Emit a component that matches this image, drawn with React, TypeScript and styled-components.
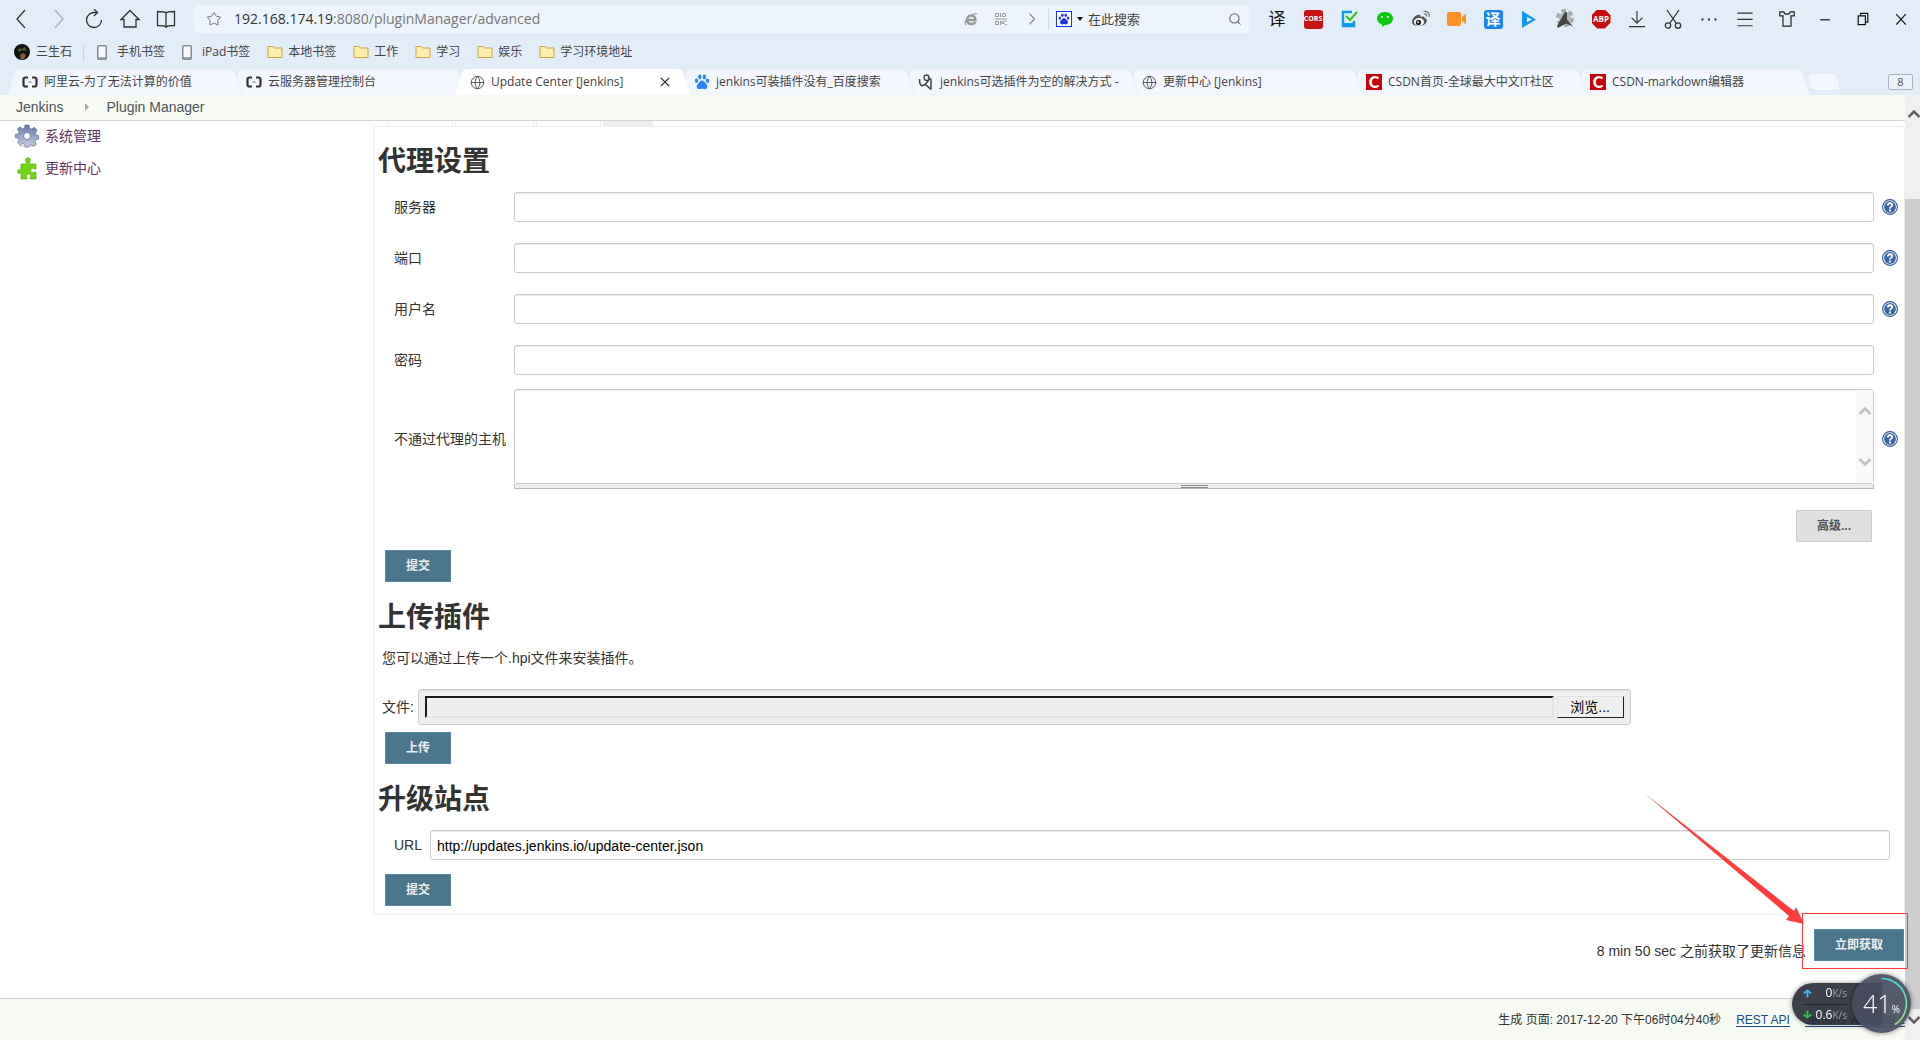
import React from 'react';
import styled, { createGlobalStyle } from 'styled-components';
import { Globe, Search, Star } from 'lucide-react';

const uiFont = '"Open Sans", "Noto Sans CJK SC", sans-serif';
const pageFont = '"Liberation Sans", "Noto Sans CJK SC", sans-serif';

const GlobalStyle = createGlobalStyle`
  *, *::before, *::after { box-sizing: border-box; }
  body { margin: 0; background: #fff; }
  button, input, textarea { font: inherit; margin: 0; }
  svg { display: block; flex: none; }
`;

const Window = styled.div`
  display: flex;
  flex-direction: column;
  min-height: 100vh;
  color: #333;
  font-family: ${pageFont};
  font-size: 14px;
  line-height: 20px;
`;

/* ---------- browser chrome ---------- */

const Chrome = styled.header`
  background: #e3edf8;
  font-family: ${uiFont};
  font-size: 12px;
  line-height: 20px;
  color: #444;
`;

const Toolbar = styled.div`
  display: flex;
  align-items: center;
  height: 38px;
`;

const ToolButtons = styled.div`
  display: flex;
  padding-left: 4px;
  width: 194px;
  flex: none;
`;

const IconButton = styled.button<{ $w?: number }>`
  display: flex;
  align-items: center;
  justify-content: center;
  flex: none;
  width: ${(p) => p.$w ?? 36}px;
  height: 28px;
  padding: 0;
  border: 0;
  background: none;
  color: #333;
`;

const AddressBar = styled.div`
  display: flex;
  flex: 1;
  align-items: center;
  height: 28px;
  border-radius: 4px;
  background: #eef4fb;
  min-width: 0;
`;

const Address = styled.div`
  flex: 1;
  font-size: 14px;
  color: #777;
  white-space: nowrap;
  overflow: hidden;
`;

const Host = styled.span`
  color: #333;
`;

const SearchBox = styled.div`
  display: flex;
  align-items: center;
  width: 202px;
  height: 22px;
  padding-left: 7px;
  border-left: 1px solid #cfdae6;
`;

const SearchInput = styled.input`
  flex: 1;
  min-width: 0;
  padding: 0;
  border: 0;
  background: none;
  font-size: 13px;
  color: #444;
  &::placeholder { color: #444; opacity: 1; }
`;

const Extensions = styled.div`
  display: flex;
  flex: none;
  padding-left: 9px;
`;

const Controls = styled.div`
  display: flex;
  flex: none;
  margin-left: 5px;
`;

const TextBadge = styled.span<{ $bg: string; $size: number; $round?: number }>`
  display: flex;
  align-items: center;
  justify-content: center;
  width: 19px;
  height: 19px;
  border-radius: ${(p) => p.$round ?? 3}px;
  background: ${(p) => p.$bg};
  color: #fff;
  font-size: ${(p) => p.$size}px;
  font-weight: 700;
`;

const Octagon = styled(TextBadge)`
  clip-path: polygon(30% 0, 70% 0, 100% 30%, 100% 70%, 70% 100%, 30% 100%, 0 70%, 0 30%);
`;

const PlainGlyph = styled.span`
  font-size: 17px;
  color: #111;
`;

const Bookmarks = styled.nav`
  display: flex;
  align-items: center;
  gap: 17px;
  height: 28px;
  padding-left: 14px;
`;

const Bookmark = styled.a<{ $gap?: number }>`
  display: flex;
  align-items: center;
  gap: ${(p) => p.$gap ?? 5}px;
  color: #444;
  text-decoration: none;
  white-space: nowrap;
`;

const Divider = styled.span`
  width: 1px;
  height: 16px;
  margin: 0 -4px -1px -6px;
  background: #c8d3df;
`;

const TabStrip = styled.div`
  display: flex;
  align-items: flex-end;
  height: 29px;
  padding: 0 7px 0 5px;
`;

const Tab = styled.div<{ $z: number }>`
  position: relative;
  z-index: ${(p) => p.$z};
  flex: 0 1 224px;
  min-width: 0;
  height: 26px;
`;

const TabShape = styled.svg`
  position: absolute;
  left: 0;
  top: 0;
  width: calc(100% + 14px);
  height: 26px;
`;

const TabFace = styled.button`
  position: relative;
  display: flex;
  align-items: center;
  gap: 6px;
  width: 100%;
  height: 26px;
  padding: 0 6px 0 17px;
  border: 0;
  background: none;
  color: #444;
  text-align: left;
  white-space: nowrap;
`;

const TabTitle = styled.span`
  flex: 1;
`;

const FavC = styled.span`
  width: 16px;
  height: 16px;
  background: #c8000b;
  color: #fff;
  font: 900 16px/16px "Lato", sans-serif;
  text-align: center;
`;

const NewTab = styled.button`
  width: 28px;
  height: 16px;
  margin: 0 0 5px 13px;
  padding: 0;
  border: 0;
  border-radius: 4px;
  background: #f3f7fd;
  transform: skewX(15deg);
`;

const TabCount = styled.button`
  width: 25px;
  height: 16px;
  margin: 0 0 5px auto;
  padding: 0;
  border: 1px solid #a9b4c0;
  border-radius: 2px;
  background: #eaf1f9;
  color: #555;
  font-size: 11px;
  line-height: 14px;
`;

/* ---------- page ---------- */

const Viewport = styled.div`
  display: flex;
  flex: 1;
`;

const Page = styled.div`
  display: flex;
  flex: 1;
  flex-direction: column;
  min-width: 0;
`;

const Breadcrumbs = styled.nav`
  display: flex;
  align-items: center;
  height: 26px;
  padding: 0 16px 2px;
  border-bottom: 1px solid #d3d7cf;
  background: #f6faf2;
`;

const Crumb = styled.a`
  color: #4d545d;
  text-decoration: none;
`;

const CrumbArrow = styled.span`
  width: 4px;
  margin: 0 17px 0 22px;
  border: 4px solid transparent;
  border-left-color: #aaa;
  border-right: 0;
`;

const Body = styled.div`
  display: flex;
  flex: 1;
`;

const SidePanel = styled.nav`
  display: flex;
  flex-direction: column;
  gap: 8px;
  width: 373px;
  flex: none;
  padding: 3px 15px;
`;

const Task = styled.a`
  display: flex;
  align-items: center;
  gap: 6px;
  height: 24px;
  color: #5c3566;
  text-decoration: none;
`;

const Main = styled.main`
  flex: 1;
  min-width: 0;
`;

const TabRow = styled.div`
  display: flex;
  gap: 2px;
  height: 5px;
  padding-left: 15px;
`;

const TabStub = styled.span<{ $w: number; $active?: boolean }>`
  width: ${(p) => p.$w}px;
  border: solid #eee;
  border-width: 0 1px;
  background: ${(p) => (p.$active ? '#eee' : '#fff')};
`;

const Panel = styled.div`
  padding: 17px 6px 8px 4px;
  border: 1px solid #eee;
  border-radius: 4px;
`;

const Heading = styled.h1`
  margin: 0 0 12px;
  font-size: 28px;
  line-height: 36px;
  font-weight: 700;
`;

const Section = styled.section`
  & + & { margin-top: 18px; }
`;

const Fields = styled.div`
  display: grid;
  gap: 21px;
`;

const FieldRow = styled.div`
  display: grid;
  grid-template-columns: 120px 1fr 24px;
  align-items: center;
  padding-left: 16px;
`;

const HostsRow = styled(FieldRow)`
  margin-top: -7px;
`;

const UrlRow = styled.div`
  display: grid;
  grid-template-columns: 36px 1fr;
  align-items: center;
  padding: 0 8px 0 16px;
`;

const fieldBox = `
  border: 1px solid #ccc;
  border-radius: 3px;
  background: #fff;
  box-shadow: inset 0 1px 1px rgba(0, 0, 0, 0.08);
`;

const TextInput = styled.input`
  ${fieldBox}
  width: 100%;
  height: 30px;
  padding: 2px 6px 0;
  color: #000;
`;

const HelpButton = styled.button`
  width: 16px;
  height: 16px;
  margin-left: 8px;
  padding: 0;
  border: 0;
  background: none;
`;

const AreaBox = styled.div`
  ${fieldBox}
  display: flex;
  height: 95px;
`;

const Area = styled.textarea`
  flex: 1;
  padding: 6px;
  border: 0;
  background: none;
  resize: none;
  overflow: hidden;
`;

const AreaScroll = styled.div`
  display: flex;
  flex-direction: column;
  justify-content: space-between;
  align-items: center;
  width: 17px;
  padding: 16px 0;
  background: #f8f8f8;
`;

const ResizeBar = styled.div`
  display: flex;
  justify-content: center;
  align-items: flex-end;
  height: 5px;
  border: solid #b9b9b3;
  border-width: 0 1px 1px;
  background: #eee;
`;

const Grip = styled.span`
  width: 27px;
  height: 3px;
  border: solid #888a85;
  border-width: 1px 0;
`;

const AdvancedRow = styled.div`
  display: flex;
  justify-content: flex-end;
  padding-right: 26px;
  margin-bottom: 8px;
`;

const PlainButton = styled.button`
  height: 32px;
  padding: 0 20px;
  border: 1px solid #ccc;
  background: #e0e0e0;
  color: #4d545d;
  font-size: 12px;
  font-weight: 700;
`;

const PrimaryButton = styled.button`
  height: 32px;
  padding: 0 20px;
  border: 1px solid #5788a0;
  background: #4b758b;
  color: #eee;
  font-size: 12px;
  font-weight: 700;
  white-space: nowrap;
`;

const Submit = styled(PrimaryButton)<{ $top?: number }>`
  display: block;
  margin: ${(p) => p.$top ?? 0}px 0 0 7px;
`;

const Intro = styled.p`
  margin: 0 4px;
  padding-bottom: 21px;
`;

const FileRow = styled.div`
  display: flex;
  align-items: center;
  gap: 4px;
  padding-left: 4px;
`;

const FilePicker = styled.div`
  display: flex;
  gap: 3px;
  width: 80%;
  height: 36px;
  padding: 6px;
  border: 1px solid #ccc;
  border-radius: 3px;
  background: #efefef;
  box-shadow: inset 0 1px 1px rgba(0, 0, 0, 0.08);
`;

const FileName = styled.input`
  flex: 1;
  min-width: 0;
  border: 2px solid;
  border-color: #1a1a1a #e3e3e3 #e3e3e3 #1a1a1a;
  background: #efefef;
`;

const Browse = styled.button`
  width: 67px;
  padding: 0;
  border: 1px solid;
  border-color: #e3e3e3 #222 #222 #e3e3e3;
  background: #efefef;
  color: #000;
`;

const CheckRow = styled.div`
  display: flex;
  justify-content: flex-end;
  align-items: flex-end;
  gap: 8px;
  padding: 14px 1px 36px 0;
`;

const Marked = styled.div`
  position: relative;
  z-index: 10;
`;

const MarkFrame = styled.span`
  position: absolute;
  inset: -16px -4px -8px -12px;
  border: 1px solid #ff3b3b;
  pointer-events: none;
`;

const MarkArrow = styled.svg`
  position: absolute;
  right: 100px;
  bottom: 36px;
  pointer-events: none;
`;

const Footer = styled.footer`
  display: flex;
  justify-content: flex-end;
  align-items: center;
  gap: 15px;
  height: 42px;
  border-top: 1px solid #d3d7cf;
  background: #f6faf2;
  font-size: 12px;
  white-space: nowrap;
`;

const FootLink = styled.a`
  color: #204a87;
  text-underline-offset: 2px;
`;

const ScrollTrack = styled.div`
  display: flex;
  flex-direction: column;
  width: 15px;
  flex: none;
  background: #f0f0f0;
`;

const ScrollEnd = styled.div<{ $h: number; $top: number }>`
  height: ${(p) => p.$h}px;
  padding: ${(p) => p.$top}px 0 0 3px;
  overflow: hidden;
`;

const ScrollThumb = styled.div`
  flex: 1;
  background: #cdcdcd;
`;

/* ---------- network monitor ---------- */

const Monitor = styled.aside`
  position: fixed;
  z-index: 20;
  right: 9px;
  bottom: 7px;
  display: flex;
  align-items: center;
  color: #fff;
  font-family: "Open Sans", sans-serif;
`;

const Rates = styled.div`
  display: grid;
  grid-template-rows: 21px 21px;
  width: 90px;
  margin-right: -30px;
  padding: 0 35px 0 11px;
  border-radius: 21px 0 0 21px;
  background: rgba(34, 38, 49, 0.88);
  box-shadow: 0 0 5px rgba(0, 0, 0, 0.4);
`;

const Rate = styled.div`
  display: flex;
  align-items: center;
  justify-content: space-between;
  font-size: 12px;
  line-height: 20px;
  white-space: nowrap;
  & + & { border-top: 1px solid #22252e; }
`;

const Unit = styled.small`
  font-size: 10px;
  color: #9a9da6;
`;

const Gauge = styled.div`
  position: relative;
  display: flex;
  align-items: baseline;
  justify-content: center;
  width: 59px;
  height: 59px;
  border-radius: 50%;
  background: rgba(72, 78, 96, 0.92);
  box-shadow: 0 0 5px rgba(0, 0, 0, 0.5);
  font-size: 25px;
  line-height: 59px;
  font-weight: 300;
`;

const Percent = styled.small`
  font-size: 10px;
  font-weight: 400;
`;

const Arc = styled.svg`
  position: absolute;
  left: 0;
  top: 0;
`;

/* ---------- drawings ---------- */

const Line = ({ d, w = 20, color = '#333', sw = 1.3 }: { d: string; w?: number; color?: string; sw?: number }) => (
  <svg width={w} height={w} viewBox="0 0 20 20" fill="none" stroke={color} strokeWidth={sw}>
    <path d={d} />
  </svg>
);

const Folder = () => (
  <svg width="16" height="14" viewBox="0 0 16 14">
    <path d="M1 1.500h5l1.500 1.500h7.500v9.500H1z" fill="#fdeeb0" stroke="#cba344" />
  </svg>
);

const Phone = () => (
  <svg width="10" height="15" viewBox="0 0 10 15">
    <rect x="0.750" y="0.750" width="8.500" height="13.500" rx="1" fill="#f7fafd" stroke="#868b92" strokeWidth="1.500" />
    <path d="M1 13h8" stroke="#868b92" strokeWidth="1.500" />
  </svg>
);

const Avatar = () => (
  <svg width="16" height="16" viewBox="0 0 16 16">
    <circle cx="8" cy="8" r="8" fill="#11130f" />
    <path d="M3 6l3-2 2 1 3-2 2 3-3 1-2-1-2 2z" fill="#4c5538" />
    <path d="M6 11l3-2 3 2-2 4-3 .5z" fill="#8a5a35" />
  </svg>
);

const Cloud = () => (
  <svg width="16" height="12" viewBox="0 0 16 12" fill="none" stroke="#333" strokeWidth="2.200">
    <path d="M6 1.500H3.500Q1.500 1.500 1.500 3.500v5q0 2 2 2H6M10 1.500h2.500q2 0 2 2v5q0 2-2 2H10" />
    <path d="M6.500 6h3" strokeWidth="1.200" stroke="#888" />
  </svg>
);

const Paw = ({ color = '#2c86f8', size = 16 }: { color?: string; size?: number }) => (
  <svg width={size} height={size} viewBox="0 0 16 16" fill={color}>
    <ellipse cx="2.500" cy="6.800" rx="1.700" ry="2.200" />
    <ellipse cx="5.800" cy="3" rx="1.700" ry="2.400" />
    <ellipse cx="10.300" cy="3" rx="1.700" ry="2.400" />
    <ellipse cx="13.500" cy="6.800" rx="1.700" ry="2.200" />
    <path d="M8 6.500c2 0 2.500 1.800 4 3.200 2.200 2 1.300 5.500-1.200 5.500-1.200 0-1.800-.4-2.800-.4s-1.600.4-2.800.4c-2.500 0-3.400-3.500-1.200-5.500C5.500 8.300 6 6.500 8 6.500z" />
  </svg>
);

const PawFrame = () => (
  <svg width="16" height="16" viewBox="0 0 16 16">
    <rect x="0.500" y="0.500" width="15" height="15" fill="#fff" stroke="#1a35f0" />
    <svg x="2" y="2" width="12" height="12"><Paw color="#1a35f0" size={12} /></svg>
  </svg>
);

const Blog = () => (
  <svg width="16" height="16" viewBox="0 0 16 16" fill="none" stroke="#444" strokeWidth="1.500">
    <path d="M1.500 5c0 5 1 8 4.500 6 3-2 5-4 5-7 0-4-5-4-5-.5 0 3 3 4 5.500 1.500q1.500-1 1.500 1v9.500M7 10l6 5.500" />
  </svg>
);

const EIcon = () => (
  <svg width="14" height="14" viewBox="0 0 14 14" fill="none" stroke="#999" strokeWidth="2.400">
    <path d="M3 8h8.500c0-6-8.500-6-8.500 0 0 5 7 5 8.200 2" />
    <path d="M2 13C-1 10 5 2 13 1.500" strokeWidth="1.200" />
  </svg>
);

const Qr = () => (
  <svg width="12" height="12" viewBox="0 0 12 12" fill="none" stroke="#999">
    <path d="M.5.500h3v3h-3zM7.500.500h3v3h-3zM.5 8.500h3v3h-3zM5.500 0v4M0 6h12M5.500 8v4M7 8.500h2v2H7zM10 8h2M10 11.500h2" />
  </svg>
);

const Weibo = () => (
  <svg width="20" height="20" viewBox="0 0 20 20">
    <path d="M1 13c0-4 5-8 8-7 1 .4.800 1.500.6 2 2-1 4-.8 4 1 3 1 2.800 4 .4 6-4 3.500-13 2.500-13-2z" fill="#555" />
    <ellipse cx="8" cy="13" rx="5" ry="4" fill="#fff" />
    <circle cx="7.500" cy="13.500" r="2.700" fill="#222" />
    <circle cx="7" cy="13" r="0.900" fill="#fff" />
    <path d="M13 5c2-.5 3 1 2.500 2.500M12.500 2.500c4-1 6.500 2 5.500 5.500" fill="none" stroke="#777" strokeWidth="1.200" />
  </svg>
);

const Wechat = () => (
  <svg width="18" height="18" viewBox="0 0 18 18">
    <path d="M9 2c4.500 0 8 2.700 8 6.500S13.500 15 9 15l-3 2v-2.500C3 13.500 1 11.500 1 8.500 1 4.700 4.500 2 9 2z" fill="#0bcb0b" />
    <circle cx="6" cy="7" r="1.100" fill="#fff" />
    <circle cx="12" cy="7" r="1.100" fill="#fff" />
  </svg>
);

const Todo = () => (
  <svg width="18" height="18" viewBox="0 0 18 18" fill="none">
    <path d="M12 2H3v14h11v-5" stroke="#0e9bea" strokeWidth="2.400" />
    <path d="M3 15h11" stroke="#0e9bea" strokeWidth="4" />
    <path d="M6 6l4 4 7-8" stroke="#3cc01f" strokeWidth="2.200" />
  </svg>
);

const Camera = () => (
  <svg width="20" height="14" viewBox="0 0 20 14" fill="#ff9124">
    <rect width="14" height="14" rx="2" />
    <path d="M15 5l4-3.500v11L15 9z" />
  </svg>
);

const Play = () => (
  <svg width="16" height="17" viewBox="0 0 16 17">
    <path d="M1 0l14 8.500L1 17z" fill="#1296f3" />
    <path d="M6 6l5 2.500L6 11z" fill="#fff" />
  </svg>
);

const Compass = () => (
  <svg width="20" height="20" viewBox="0 0 20 20">
    <circle cx="10" cy="9" r="7" fill="none" stroke="#a5a8ab" strokeWidth="4" strokeDasharray="4.500 2.830" />
    <circle cx="10" cy="9" r="6" fill="#b5b8bb" />
    <path d="M10 3l2 .5v7l6 7-7-3-8 4.500L2 17z" fill="#444" />
  </svg>
);

const Shirt = () => <Line w={16} color="#222" sw={1.500} d="M6 1H1v5h4v13h10V6h4V1h-5c-1 4-7 4-8 0z" />;

const Scissors = () => (
  <svg width="18" height="20" viewBox="0 0 18 20" fill="none" stroke="#333" strokeWidth="1.300">
    <path d="M3 1l9 13M15 1L6 14" />
    <circle cx="4" cy="16.500" r="2.700" />
    <circle cx="14" cy="16.500" r="2.700" />
  </svg>
);

const Gear = () => (
  <svg width="24" height="24" viewBox="0 0 24 24">
    <defs>
      <linearGradient id="steel" x1="0" y1="0" x2="0" y2="1">
        <stop offset="0" stopColor="#6478a4" />
        <stop offset="1" stopColor="#c9cfe4" />
      </linearGradient>
    </defs>
    <ellipse cx="12" cy="22" rx="8" ry="1.500" fill="#ddd" />
    <path
      d="M10 1h4l.7 3.200 2 .9 2.800-1.800 2.600 2.800-1.700 2.800.8 2L24 12v3l-3 .6-1 2 1.400 2.700-2.700 2-2.500-1.700-2 .8L13.500 23h-3l-.8-2.700-2-.8-2.500 1.600-2.500-2.300 1.500-2.600-.9-2L0 13.500v-3l3.300-.7.800-2-1.800-2.700L5 2.800l2.500 1.900 2-.8z"
      fill="url(#steel)" stroke="#6f7ca3" strokeWidth="0.800"
    />
    <circle cx="12" cy="12" r="3.500" fill="#fff" stroke="#7582a8" />
  </svg>
);

const Puzzle = () => (
  <svg width="24" height="24" viewBox="0 0 24 24">
    <path
      d="M11 8c1-1.500-.8-2.500-.3-4.500C11.300 1 15 1 15.300 3.500 15.500 5.500 14 6 14.500 8H21v5c-1.500.5-2-1-3.500-.7-2.500.5-2.300 4 .2 4.300 1.500.2 2-1 3.300-.6V23h-6c-.5-1.500.8-2 .5-3.400-.5-2.200-3.600-2-3.900.2-.2 1.300.9 1.800.4 3.200H6v-6c-1 0-1.500 1-2.500.4-1.500-1-1-4 .8-4 .8 0 1 .8 1.700.6V8z"
      fill="#73d216" stroke="#5fb512" strokeWidth="0.700"
    />
  </svg>
);

const Help = () => (
  <svg width="16" height="16" viewBox="0 0 16 16">
    <circle cx="8" cy="8" r="7.400" fill="#fff" stroke="#2c5594" strokeWidth="1.100" />
    <circle cx="8" cy="8" r="5.900" fill="#3a66a6" />
    <path d="M5.900 6.500c0-3 4.400-2.800 4.400-.5C10.300 7.600 8 7.700 8 9.400M8 10.500v2" fill="none" stroke="#fff" strokeWidth="1.800" />
  </svg>
);

const Chevron = ({ up, color }: { up?: boolean; color: string }) => (
  <svg width="12" height="10" viewBox="0 0 12 10" fill="none" stroke={color} strokeWidth="2.600">
    <path d={up ? 'M.5 8L6 2.500 11.500 8' : 'M.5 2L6 7.500 11.500 2'} />
  </svg>
);

const GlobeIcon = () => <Globe size={15} strokeWidth={1.500} color="#555" />;

/* ---------- data ---------- */

const tools = [
  { name: '后退', d: 'M13 1L5 10l8 9', color: '#333' },
  { name: '前进', d: 'M7 1l8 9-8 9', color: '#a9b0b8' },
  { name: '刷新', d: 'M17.500 11A7.500 7.500 0 1 1 10.500 3.500H13M10 0l3.500 3.500L10 7', color: '#333' },
  { name: '主页', d: 'M1 10.500L10 1.500l9 9h-3V18H4v-7.500z', color: '#333' },
  { name: '阅读', d: 'M10 4v15M10 4C9 2.500 7 2.500 1.500 2.500V16.500c5 0 7.500 0 8.500 1.500 1-1.500 3.500-1.500 8.500-1.500V2.500C13 2.500 11 2.500 10 4z', color: '#333' },
];

const extensions = [
  { name: '划词翻译', icon: <PlainGlyph>译</PlainGlyph> },
  { name: 'CORS', icon: <TextBadge $bg="#c81414" $size={7}>CORS</TextBadge> },
  { name: '待办', icon: <Todo /> },
  { name: '微信', icon: <Wechat /> },
  { name: '微博', icon: <Weibo /> },
  { name: '录像', icon: <Camera /> },
  { name: '翻译', icon: <TextBadge $bg="#1784f5" $size={15}>译</TextBadge> },
  { name: '播放', icon: <Play /> },
  { name: '工具箱', icon: <Compass /> },
  { name: 'ABP', icon: <Octagon $bg="#c60c0d" $size={8} $round={0}>ABP</Octagon> },
  { name: '下载', icon: <Line w={18} d="M10 1v13M4 8.500l6 6 6-6M1 18.500h18" /> },
  { name: '截图', icon: <Scissors /> },
  { name: '更多', icon: <Line d="M2.500 10.500h2M9 10.500h2M15.500 10.500h2" sw={2} /> },
  { name: '菜单', icon: <Line w={18} d="M1.500 3.500h17M1.500 10.500h17M1.500 17.500h17" /> },
];

const controls = [
  { name: '皮肤', icon: <Shirt /> },
  { name: '最小化', icon: <Line w={16} color="#111" sw={1.500} d="M4 11h12" /> },
  { name: '还原', icon: <Line w={16} color="#111" sw={1.500} d="M4 6h9v11H4zM7 6V3h9v11h-3" /> },
  { name: '关闭', icon: <Line w={16} color="#111" sw={1.500} d="M4 4l12 13M16 4L4 17" /> },
];

const folders = ['本地书签', '工作', '学习', '娱乐', '学习环境地址'];

const tabs = [
  { title: '阿里云-为了无法计算的价值', icon: <Cloud /> },
  { title: '云服务器管理控制台', icon: <Cloud /> },
  { title: 'Update Center [Jenkins]', icon: <GlobeIcon />, active: true },
  { title: 'jenkins可装插件没有_百度搜索', icon: <Paw /> },
  { title: 'jenkins可选插件为空的解决方式 -', icon: <Blog /> },
  { title: '更新中心 [Jenkins]', icon: <GlobeIcon /> },
  { title: 'CSDN首页-全球最大中文IT社区', icon: <FavC>C</FavC> },
  { title: 'CSDN-markdown编辑器', icon: <FavC>C</FavC> },
];

const proxyFields = [
  { id: 'server', label: '服务器', help: true },
  { id: 'port', label: '端口', help: true },
  { id: 'user', label: '用户名', help: true },
  { id: 'password', label: '密码', help: false, type: 'password' },
];

const HelpFor = ({ label }: { label: string }) => (
  <HelpButton type="button" aria-label={`帮助: ${label}`}><Help /></HelpButton>
);

const BrowserChrome = () => (
  <Chrome>
    <Toolbar>
      <ToolButtons>
        {tools.map((t) => (
          <IconButton key={t.name} aria-label={t.name}><Line d={t.d} color={t.color} /></IconButton>
        ))}
      </ToolButtons>
      <AddressBar>
        <IconButton $w={40} aria-label="收藏"><Star size={16} strokeWidth={1.500} color="#777" /></IconButton>
        <Address><Host>192.168.174.19</Host>:8080/pluginManager/advanced</Address>
        <IconButton $w={30} aria-label="内核"><EIcon /></IconButton>
        <IconButton $w={30} aria-label="二维码"><Qr /></IconButton>
        <IconButton $w={32} aria-label="展开"><Line w={12} color="#888" sw={2} d="M6 1l8 9-8 9" /></IconButton>
        <SearchBox>
          <PawFrame />
          <IconButton $w={16} aria-label="搜索引擎">
            <svg width="6" height="4" viewBox="0 0 6 4"><path d="M0 0h6L3 4z" fill="#111" /></svg>
          </IconButton>
          <SearchInput aria-label="搜索" placeholder="在此搜索" />
          <IconButton $w={30} aria-label="开始搜索"><Search size={14} strokeWidth={1.800} color="#666" /></IconButton>
        </SearchBox>
      </AddressBar>
      <Extensions>
        {extensions.map((e) => <IconButton key={e.name} aria-label={e.name}>{e.icon}</IconButton>)}
      </Extensions>
      <Controls>
        {controls.map((c) => <IconButton key={c.name} $w={38} aria-label={c.name}>{c.icon}</IconButton>)}
      </Controls>
    </Toolbar>
    <Bookmarks>
      <Bookmark href="#" $gap={6}><Avatar />三生石</Bookmark>
      <Divider />
      <Bookmark href="#" $gap={10}><Phone />手机书签</Bookmark>
      <Bookmark href="#" $gap={10}><Phone />iPad书签</Bookmark>
      {folders.map((f) => <Bookmark key={f} href="#"><Folder />{f}</Bookmark>)}
    </Bookmarks>
    <TabStrip role="tablist">
      {tabs.map((t, i) => (
        <Tab key={t.title} $z={t.active ? 9 : 8 - i}>
          <TabShape viewBox="0 0 238 26" preserveAspectRatio="none">
            <path
              d="M0 26Q3 25 4 21L9 4Q10 0 15 0H224Q229 0 230 4L235 21Q236 25 238 26z"
              fill={t.active ? '#fff' : '#f3f7fd'} stroke={t.active ? 'none' : '#e3edf8'}
            />
          </TabShape>
          <TabFace role="tab" aria-selected={!!t.active}>
            {t.icon}
            <TabTitle>{t.title}</TabTitle>
            {t.active && <Line w={12} color="#222" sw={2} d="M3 3l14 14M17 3L3 17" />}
          </TabFace>
        </Tab>
      ))}
      <NewTab aria-label="新标签页" />
      <TabCount>8</TabCount>
    </TabStrip>
  </Chrome>
);

const ProxySection = () => (
  <Section>
    <Heading>代理设置</Heading>
    <Fields>
      {proxyFields.map((f) => (
        <FieldRow key={f.id}>
          <label htmlFor={f.id}>{f.label}</label>
          <TextInput id={f.id} type={f.type ?? 'text'} />
          {f.help && <HelpFor label={f.label} />}
        </FieldRow>
      ))}
      <HostsRow>
        <label htmlFor="hosts">不通过代理的主机</label>
        <div>
          <AreaBox>
            <Area id="hosts" />
            <AreaScroll>
              <Chevron up color="#c1c1c1" />
              <Chevron color="#c1c1c1" />
            </AreaScroll>
          </AreaBox>
          <ResizeBar><Grip /></ResizeBar>
        </div>
        <HelpFor label="不通过代理的主机" />
      </HostsRow>
      <AdvancedRow><PlainButton type="button">高级...</PlainButton></AdvancedRow>
    </Fields>
    <Submit type="button">提交</Submit>
  </Section>
);

export default function App() {
  return (
    <Window>
      <GlobalStyle />
      <BrowserChrome />
      <Viewport>
        <Page>
          <Breadcrumbs>
            <Crumb href="#">Jenkins</Crumb>
            <CrumbArrow />
            <Crumb href="#">Plugin Manager</Crumb>
          </Breadcrumbs>
          <Body>
            <SidePanel>
              <Task href="#"><Gear />系统管理</Task>
              <Task href="#"><Puzzle />更新中心</Task>
            </SidePanel>
            <Main>
              <TabRow>
                <TabStub $w={65} />
                <TabStub $w={79} />
                <TabStub $w={65} />
                <TabStub $w={50} $active />
              </TabRow>
              <Panel>
                <ProxySection />
                <Section>
                  <Heading>上传插件</Heading>
                  <Intro>您可以通过上传一个.hpi文件来安装插件。</Intro>
                  <FileRow>
                    <label htmlFor="file">文件:</label>
                    <FilePicker>
                      <FileName id="file" type="text" readOnly />
                      <Browse type="button">浏览...</Browse>
                    </FilePicker>
                  </FileRow>
                  <Submit type="button" $top={7}>上传</Submit>
                </Section>
                <Section>
                  <Heading>升级站点</Heading>
                  <UrlRow>
                    <label htmlFor="url">URL</label>
                    <TextInput id="url" type="text" defaultValue="http://updates.jenkins.io/update-center.json" />
                  </UrlRow>
                  <Submit type="button" $top={14}>提交</Submit>
                </Section>
              </Panel>
              <CheckRow>
                <span>8 min 50 sec 之前获取了更新信息</span>
                <Marked>
                  <PrimaryButton type="button">立即获取</PrimaryButton>
                  <MarkFrame />
                  <MarkArrow width="160" height="132" viewBox="0 0 160 132">
                    <path d="M0 0L150 118L152 114L160 131L142 127L145 123z" fill="#ff3b3b" />
                  </MarkArrow>
                </Marked>
              </CheckRow>
            </Main>
          </Body>
          <Footer>
            <span>生成 页面: 2017-12-20 下午06时04分40秒</span>
            <FootLink href="#">REST API</FootLink>
            <FootLink href="#">Jenkins ver. 2.89.1</FootLink>
          </Footer>
        </Page>
        <ScrollTrack aria-hidden="true">
          <ScrollEnd $h={104} $top={14}><Chevron up color="#606060" /></ScrollEnd>
          <ScrollThumb />
          <ScrollEnd $h={31} $top={6}><Chevron color="#606060" /></ScrollEnd>
        </ScrollTrack>
      </Viewport>
      <Monitor>
        <Rates>
          <Rate>
            <Line w={9} color="#3fb4f5" sw={4} d="M10 19V3M2 10l8-7 8 7" />
            <span>0<Unit>K/s</Unit></span>
          </Rate>
          <Rate>
            <Line w={9} color="#2fc04a" sw={4} d="M10 1v16M2 10l8 7 8-7" />
            <span>0.6<Unit>K/s</Unit></span>
          </Rate>
        </Rates>
        <Gauge>
          <Arc width="59" height="59" viewBox="0 0 59 59" fill="none" strokeWidth="1.600">
            <defs>
              <linearGradient id="arc" x1="0" y1="0" x2="0" y2="1">
                <stop offset="0" stopColor="#43dbe0" />
                <stop offset="1" stopColor="#a6e070" />
              </linearGradient>
            </defs>
            <path d="M29.500 4.500A25 25 0 0 1 43 50.500" stroke="url(#arc)" />
          </Arc>
          41<Percent>%</Percent>
        </Gauge>
      </Monitor>
    </Window>
  );
}
